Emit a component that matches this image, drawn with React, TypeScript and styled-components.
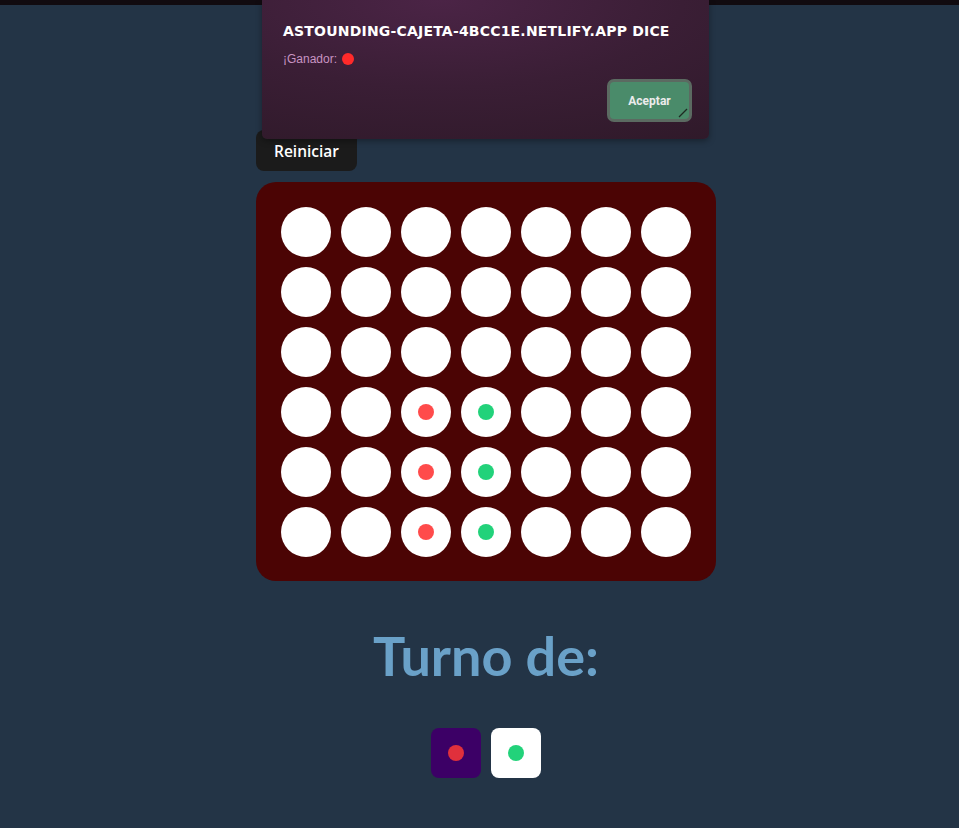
import React from "react";
import styled, { createGlobalStyle } from "styled-components";

const Global = createGlobalStyle`
  html, body { margin: 0; padding: 0; background: #233446; }
  body { min-height: 828px; overflow: hidden; font-family: "Open Sans", "Liberation Sans", sans-serif; }
`;

const Page = styled.div`
  position: relative;
  min-height: 828px;
  display: flex;
  flex-direction: column;
`;

const TopStrip = styled.div`
  height: 5px;
  background: #110b10;
`;

const Main = styled.main`
  display: flex;
  flex-direction: column;
  align-items: center;
  padding-left: 13px;
  padding-top: 125px;
`;

const Column = styled.div`
  width: 460px;
  display: flex;
  flex-direction: column;
  align-items: flex-start;
`;

const ResetButton = styled.button`
  height: 41px;
  width: 101px;
  border: none;
  border-radius: 8px;
  background: #1b1b1b;
  color: #ffffff;
  font-family: "Open Sans", sans-serif;
  font-weight: 600;
  font-size: 15.5px;
  cursor: pointer;
  padding: 0;
`;

const Board = styled.div`
  margin-top: 11px;
  width: 460px;
  box-sizing: border-box;
  padding: 25px 25px 24px;
  background: #4b0404;
  border-radius: 20px;
  display: grid;
  grid-template-columns: repeat(7, 50px);
  grid-auto-rows: 50px;
  gap: 10px;
`;

const Cell = styled.div`
  width: 50px;
  height: 50px;
  border-radius: 50%;
  background: #ffffff;
  display: flex;
  align-items: center;
  justify-content: center;
`;

const Piece = styled.span<{ $color: string; $size?: number }>`
  width: ${(p) => p.$size ?? 16}px;
  height: ${(p) => p.$size ?? 16}px;
  border-radius: 50%;
  background: ${(p) => p.$color};
  display: inline-block;
`;

const TurnTitle = styled.h1`
  margin: 42px 0 0;
  font-family: Lato, "Open Sans", sans-serif;
  font-weight: 700;
  font-size: 54px;
  color: #6aa1c8;
  text-align: center;
`;

const Players = styled.div`
  margin-top: 40px;
  display: flex;
  gap: 10px;
`;

const PlayerBox = styled.div<{ $bg: string }>`
  width: 50px;
  height: 50px;
  border-radius: 8px;
  background: ${(p) => p.$bg};
  display: flex;
  align-items: center;
  justify-content: center;
`;

const Dialog = styled.div`
  position: absolute;
  top: 0;
  left: 262px;
  width: 447px;
  height: 139px;
  box-sizing: border-box;
  padding: 22px 17px 0 21px;
  border-radius: 0 0 5px 5px;
  background: radial-gradient(ellipse 120% 140% at 40% 0%, #4b2446 0%, #3a1e35 45%, #2c1826 100%);
  box-shadow: 0 2px 6px rgba(0, 0, 0, 0.35);
  display: flex;
  flex-direction: column;
`;

const DialogTitle = styled.div`
  font-family: "DejaVu Sans", sans-serif;
  font-weight: 700;
  font-size: 14px;
  letter-spacing: 0.2px;
  white-space: nowrap;
  color: #ffffff;
  text-transform: uppercase;
  line-height: 18px;
`;

const DialogMessage = styled.div`
  margin-top: 12px;
  display: flex;
  align-items: center;
  gap: 5px;
  font-family: "Liberation Sans", Arial, sans-serif;
  font-size: 12px;
  color: #c894c2;
`;

const DialogActions = styled.div`
  margin-top: 13px;
  display: flex;
  justify-content: flex-end;
`;

const AcceptButton = styled.button`
  position: relative;
  width: 85px;
  height: 43px;
  box-sizing: border-box;
  border: 3px solid #5b6a61;
  border-radius: 7px;
  background: #4a8b6a;
  color: #ececec;
  font-family: Roboto, "Liberation Sans", sans-serif;
  font-weight: 700;
  font-size: 12px;
  cursor: pointer;
  padding: 0;
`;

const Grip = styled.svg`
  position: absolute;
  right: 1px;
  bottom: 1px;
`;

const board: (string | null)[][] = [
  [null, null, null, null, null, null, null],
  [null, null, null, null, null, null, null],
  [null, null, null, null, null, null, null],
  [null, null, "r", "g", null, null, null],
  [null, null, "r", "g", null, null, null],
  [null, null, "r", "g", null, null, null],
];

const colors: Record<string, string> = { r: "#ff4b4b", g: "#22d27a" };

export default function App() {
  return (
    <Page>
      <Global />
      <TopStrip />
      <Main>
        <Column>
          <ResetButton>Reiniciar</ResetButton>
          <Board>
            {board.flatMap((row, r) =>
              row.map((c, i) => (
                <Cell key={`${r}-${i}`}>{c && <Piece $color={colors[c]} />}</Cell>
              ))
            )}
          </Board>
        </Column>
        <TurnTitle>Turno de:</TurnTitle>
        <Players>
          <PlayerBox $bg="#3c0066">
            <Piece $color="#e0303c" />
          </PlayerBox>
          <PlayerBox $bg="#ffffff">
            <Piece $color="#22d27a" />
          </PlayerBox>
        </Players>
      </Main>
      <Dialog>
        <DialogTitle>astounding-cajeta-4bcc1e.netlify.app dice</DialogTitle>
        <DialogMessage>
          ¡Ganador: <Piece $color="#ff2a2a" $size={12} />
        </DialogMessage>
        <DialogActions>
          <AcceptButton>
            Aceptar
            <Grip width="10" height="10" viewBox="0 0 10 10">
              <line x1="1" y1="9" x2="9" y2="1" stroke="#1e2a22" strokeWidth="1.2" />
            </Grip>
          </AcceptButton>
        </DialogActions>
      </Dialog>
    </Page>
  );
}
